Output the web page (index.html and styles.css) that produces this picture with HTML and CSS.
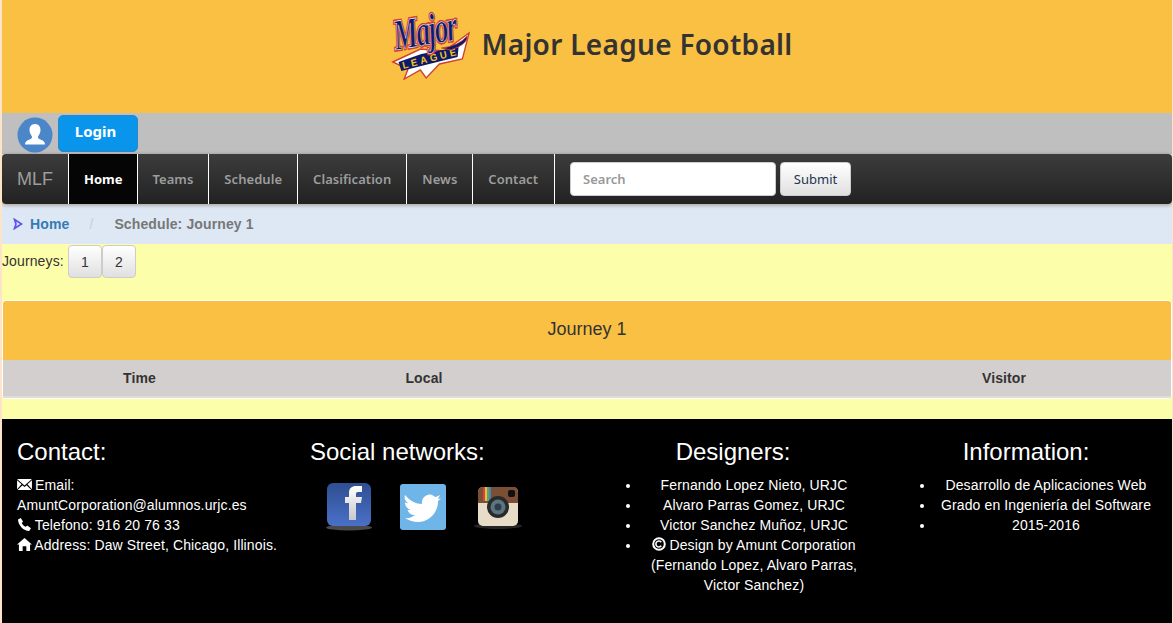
FILE: index.html
```html
<!DOCTYPE html>
<html lang="en">
<head>
  <meta charset="UTF-8">
  <title>Major League Football</title>
  <link rel="stylesheet" href="styles.css">
</head>
<body>

  <header class="top">
    <svg class="logo" viewBox="-4 -12 86 80" width="82" height="80" preserveAspectRatio="none">
      <path d="M1 50 L30 37 L55 39 L81 21 L74 47 L50 52 L36 66 L30 58 L13 67 L17 57 Z" fill="#fff" stroke="#d0402f" stroke-width="1.4"/>
      <path d="M7 50 L31 42 L70 35 L69 45 L35 53 L10 59 Z" fill="#0d1a6b"/>
      <text class="logo-league" x="12" y="57" transform="rotate(-14 12 57)">LEAGUE</text>
      <g transform="translate(4 38) rotate(-9) scale(0.92 1.4)">
        <text class="logo-major-back" x="0" y="0">Major</text>
        <text class="logo-major" x="0" y="0">Major</text>
      </g>
      <path d="M52 36 Q70 34 79 24 Q80 32 62 38 Z" fill="#0d1a6b" stroke="#d0402f" stroke-width="0.8"/>
    </svg>
    <h1 class="brand-title">Major League Football</h1>
  </header>

  <div class="user-bar">
    <svg class="avatar" viewBox="0 0 36 36" width="36" height="36">
      <circle cx="18" cy="18" r="17.5" fill="#4a86c8"/>
      <path d="M18 7 C14 7 12.5 10 12.5 13 C12.5 16 14 18 15 19.5 C15 21.5 14 22 11.5 23 C9 24 8 25.5 8 27.5 L28 27.5 C28 25.5 27 24 24.5 23 C22 22 21 21.5 21 19.5 C22 18 23.5 16 23.5 13 C23.5 10 22 7 18 7 Z" fill="#fff"/>
    </svg>
    <button class="login-btn">Login</button>
  </div>

  <nav class="navbar">
    <a class="nav-brand" href="#">MLF</a>
    <a class="nav-link active" href="#">Home</a>
    <a class="nav-link" href="#">Teams</a>
    <a class="nav-link" href="#">Schedule</a>
    <a class="nav-link" href="#">Clasification</a>
    <a class="nav-link" href="#">News</a>
    <a class="nav-link" href="#">Contact</a>
    <form class="nav-search">
      <input type="text" class="search-input" placeholder="Search">
      <button type="button" class="search-btn">Submit</button>
    </form>
  </nav>

  <div class="crumbs">
    <svg class="crumb-icon" viewBox="0 0 10 12" width="10" height="12">
      <path d="M1.5 1.5 L8.5 6 L1.5 10.5 L3 6 Z" fill="none" stroke="#5a55f0" stroke-width="1.7"/>
    </svg>
    <a class="crumb-home" href="#">Home</a>
    <span class="crumb-sep">/</span>
    <span class="crumb-current">Schedule: Journey 1</span>
  </div>

  <main class="content">
    <div class="journeys">
      <span class="journeys-label">Journeys:</span>
      <button class="page-btn">1</button>
      <button class="page-btn">2</button>
    </div>

    <section class="panel">
      <div class="panel-heading">Journey 1</div>
      <div class="table-head">
        <span>Time</span>
        <span>Local</span>
        <span></span>
        <span>Visitor</span>
      </div>
    </section>
  </main>

  <footer class="footer">
    <div class="foot-col foot-contact">
      <h3>Contact:</h3>
      <p>
        <svg class="gi" viewBox="0 0 16 14" width="15" height="13"><path d="M0 1 H16 L8 8 Z M0 2.5 L4.8 6.8 L0 12 Z M16 2.5 L11.2 6.8 L16 12 Z M5.8 7.7 L8 9.6 L10.2 7.7 L15.5 13 H.5 Z" fill="#fff"/></svg>
        Email:<br>
        AmuntCorporation@alumnos.urjc.es<br>
        <svg class="gi" viewBox="0 0 16 14" width="15" height="13"><path d="M1 1.5 L4 0 L6.5 4 L5 5.5 C5.5 7 7.5 9 9.5 9.5 L11 8 L15 11 L13 14 C7 14 1 7.5 1 1.5 Z" fill="#fff"/></svg>
        Telefono: 916 20 76 33<br>
        <svg class="gi" viewBox="0 0 16 14" width="15" height="13"><path d="M8 0 L16 7 L14 7 L14 14 L10 14 L10 9 L6 9 L6 14 L2 14 L2 7 L0 7 Z" fill="#fff"/></svg>
        Address: Daw Street, Chicago, Illinois.
      </p>
    </div>

    <div class="foot-col foot-social">
      <h3>Social networks:</h3>
      <div class="social-icons">
        <svg viewBox="0 0 48 50" width="48" height="50">
          <defs>
            <linearGradient id="fbg" x1="0" y1="0" x2="0" y2="1"><stop offset="0" stop-color="#2f4f92"/><stop offset="1" stop-color="#4a70c8"/></linearGradient>
            <linearGradient id="fbf" x1="0" y1="0" x2="0" y2="1"><stop offset="0" stop-color="#fff"/><stop offset="1" stop-color="#c8c8c8"/></linearGradient>
          </defs>
          <ellipse cx="24" cy="45.5" rx="23" ry="3" fill="#4a4a4a"/>
          <rect x="2" y="1" width="44" height="43" rx="6" fill="url(#fbg)"/>
          <path d="M24 38 V21 H20 V15 H24 V11 C24 6 27 4 31 4 H37 V10 H33 C31 10 31 11 31 13 V15 H37 L36 21 H31 V38 Z" fill="url(#fbf)"/>
        </svg>
        <svg viewBox="0 0 48 50" width="48" height="50">
          <rect x="1" y="2" width="46" height="46" rx="3" fill="#70b5e8"/>
          <path d="M6 13 C11 19 17 22 23 22 C22 16 28 11 33 13 C35 14 36 15 37 15 L41 13 L39 17 L42 16.5 L39 19 C39 31 30 40 19 40 C14 40 9 38 6 36 C10 36.5 13 35.5 16 33 C12 33 9.5 31 8.5 28 L12 28 C8.5 27 6 24 6 20.5 L9.5 21.5 C6 19 5 16 6 13 Z" fill="#fff"/>
        </svg>
        <svg viewBox="0 0 50 50" width="50" height="50">
          <ellipse cx="25" cy="44" rx="24" ry="3" fill="#252525"/>
          <rect x="5" y="5" width="40" height="39" rx="5" fill="#e6dcc8"/>
          <path d="M5 21 V10 C5 7 7 5 10 5 H40 C43 5 45 7 45 10 V21 H34 C32 17 18 17 16 21 Z" fill="#7a4f36"/>
          <rect x="10" y="5" width="2" height="14" fill="#d8423a"/>
          <rect x="12" y="5" width="2" height="14" fill="#e8c040"/>
          <rect x="14" y="5" width="2" height="14" fill="#60a858"/>
          <rect x="16" y="5" width="2" height="14" fill="#4a80c0"/>
          <circle cx="25" cy="25" r="11" fill="#2a2a2a"/>
          <circle cx="25" cy="25" r="7.5" fill="#5c7480"/>
          <circle cx="25" cy="25" r="3.5" fill="#2c3c48"/>
          <rect x="35" y="8" width="7" height="7" rx="2" fill="#111"/>
        </svg>
      </div>
    </div>

    <div class="foot-col foot-list foot-designers">
      <h3>Designers:</h3>
      <ul>
        <li>Fernando Lopez Nieto, URJC</li>
        <li>Alvaro Parras Gomez, URJC</li>
        <li>Victor Sanchez Muñoz, URJC</li>
        <li>
          <svg class="gi" viewBox="0 0 14 14" width="14" height="14"><circle cx="7" cy="7" r="5.8" fill="none" stroke="#fff" stroke-width="2"/><path d="M9.3 5.2 A3 3 0 1 0 9.3 8.8" fill="none" stroke="#fff" stroke-width="1.6"/></svg>
          Design by Amunt Corporation (Fernando Lopez, Alvaro Parras, Victor Sanchez)
        </li>
      </ul>
    </div>

    <div class="foot-col foot-list foot-info">
      <h3>Information:</h3>
      <ul>
        <li>Desarrollo de Aplicaciones Web</li>
        <li>Grado en Ingeniería del Software</li>
        <li>2015-2016</li>
      </ul>
    </div>
  </footer>

</body>
</html>
```

FILE: styles.css
```css
* { box-sizing: border-box; }
html, body { height: 100%; }
body { margin: 0 1px 0 2px; background: #fde3c8; font-family: "Liberation Sans", Arial, sans-serif; font-size: 14px; line-height: 20px; letter-spacing: 0.12px; color: #333; overflow: hidden; }

/* header */
.top { height: 113px; margin: 0 -1px 0 -2px; background: #f9c043; display: flex; justify-content: center; align-items: flex-start; padding: 0 0 0 8px; gap: 11px; }
.logo { flex: none; }
.logo-major, .logo-major-back { font-family: "Liberation Serif", serif; font-style: italic; font-weight: bold; font-size: 31px; letter-spacing: -1.5px; }
.logo-major { fill: #0d1a6b; stroke: #fff; stroke-width: 0.4px; }
.logo-major-back { fill: #fff; stroke: #d0402f; stroke-width: 2.6px; }
.logo-league { font-family: "Liberation Sans", sans-serif; font-weight: bold; font-size: 10px; fill: #f3c417; letter-spacing: 3.2px; }
.brand-title { margin: 24px 0 0; font-family: "Noto Sans", sans-serif; font-size: 28px; line-height: 40px; font-weight: 600; color: #333; letter-spacing: 0.3px; }

/* user bar */
.user-bar { height: 41px; background: #bfbfbf; display: flex; align-items: flex-start; padding: 2px 0 0 15px; gap: 5px; }
.avatar { margin-top: 2px; }
.login-btn { width: 80px; height: 37px; background: #0a95ec; border: 1px solid #2a88c8; border-radius: 5px; color: #fff; font-family: "Noto Sans", sans-serif; font-size: 15px; font-weight: 700; padding: 0 5px 5px 0; }

/* navbar */
.navbar { height: 50px; background: linear-gradient(to bottom, #3c3c3c, #222); border-radius: 4px; box-shadow: 0 1px 4px rgba(0,0,0,.35); display: flex; align-items: stretch; position: relative; }
.nav-brand { width: 66px; padding-left: 15px; color: #9d9d9d; font-size: 18px; line-height: 50px; letter-spacing: 0; text-decoration: none; }
.nav-link { padding: 0 15px; border-left: 1px solid #fff; font-family: "Noto Sans", sans-serif; font-size: 13px; font-weight: 600; line-height: 50px; letter-spacing: 0.05px; color: #9d9d9d; text-decoration: none; }
.nav-link:last-of-type { border-right: 1px solid #fff; padding-right: 16px; }
.nav-link.active { background: #050505; color: #fff; font-weight: 700; letter-spacing: 0; padding: 0 14px 0 15px; }
.nav-search { display: flex; align-items: flex-start; gap: 4px; padding: 8px 0 0 15px; }
.search-input { width: 206px; height: 34px; border: 1px solid #ccc; border-radius: 4px; padding: 0 12px; font-family: "Noto Sans", sans-serif; font-size: 13px; font-weight: 600; }
.search-input::placeholder { color: #999; }
.search-btn { width: 71px; height: 34px; background: linear-gradient(to bottom, #fff, #e0e0e0); border: 1px solid #ccc; border-radius: 4px; font-family: "Noto Sans", sans-serif; font-size: 13px; color: #1f3550; padding: 0; }

/* breadcrumb */
.crumbs { height: 39px; margin-top: 1px; padding-bottom: 2px; background: #dde8f4; display: flex; align-items: center; padding-left: 11px; font-weight: bold; color: #777; }
.crumb-icon { margin-right: 7px; }
.crumb-home { color: #337ab7; text-decoration: none; }
.crumb-sep { margin: 0 21px 0 20px; color: #ccc; font-weight: normal; }

/* journeys and panel */
.content { height: 175px; background: #fdfeaa; }
.journeys { display: flex; align-items: flex-start; height: 56px; padding-top: 1px; }
.journeys-label { line-height: 32px; margin-right: 4px; }
.page-btn { width: 34px; height: 33px; background: linear-gradient(to bottom, #fff, #e0e0e0); border: 1px solid #ccc; border-radius: 4px; font-family: "Liberation Sans", sans-serif; font-size: 14px; color: #333; padding: 0; }
.panel { border: 1px solid #fff; border-radius: 4px; }
.panel-heading { height: 59px; background: #f9c043; border-radius: 3px 3px 0 0; text-align: center; font-size: 18px; line-height: 56px; letter-spacing: 0; }
.table-head { height: 38px; background: #d3cfcf; border-bottom: 2px solid #ddd; display: grid; grid-template-columns: 273px 296px 1fr 334px; font-weight: bold; line-height: 36px; text-align: center; }

/* footer */
.footer { height: 204px; background: #000; color: #fff; display: grid; grid-template-columns: 293px 293px 292px 1fr; padding-top: 18px; letter-spacing: 0.12px; }
.foot-col { padding: 0 15px; }
.foot-col h3 { margin: 2px 0 10px; font-size: 24px; line-height: 26px; font-weight: normal; letter-spacing: 0; }
.foot-col p { margin: 0; }
.gi { vertical-align: -1px; margin-right: -1px; }
.social-icons { display: flex; gap: 26px; padding-left: 15px; margin-top: 17px; }
.foot-list { text-align: center; }
.foot-list ul { margin: 0; padding: 0 0 0 40px; }
.foot-designers { padding: 0 17px 0 13px; }
.foot-designers h3 { padding-left: 2px; }
.foot-designers ul { margin-right: -4px; }
```
